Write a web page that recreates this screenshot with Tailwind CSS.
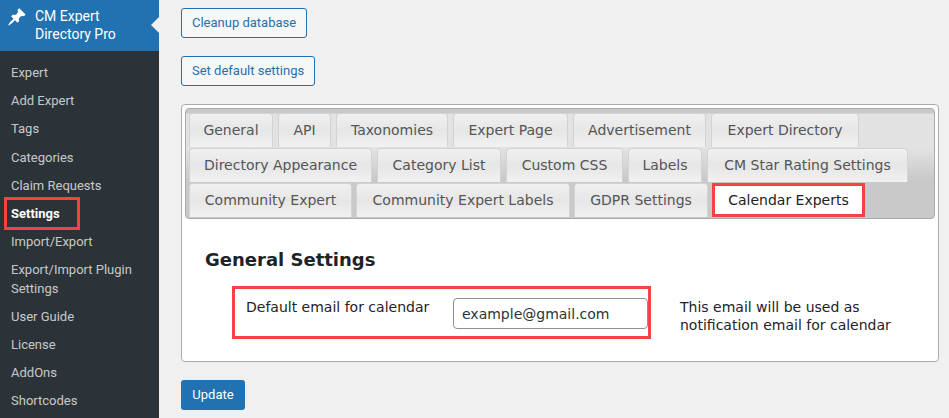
<!DOCTYPE html>
<html lang="en">
<head>
    <meta charset="UTF-8">
    <title>Settings</title>
    <script src="https://cdn.jsdelivr.net/npm/@tailwindcss/browser@4"></script>
</head>
<body class="bg-[#f0f0f1] overflow-hidden">
    <div class="flex h-[418px] w-[949px] relative overflow-hidden">
        <!-- Sidebar -->
        <aside class="w-[159px] shrink-0 bg-[#2c3338] font-['Roboto',sans-serif] text-[13px] leading-[18.2px] text-[#f0f0f1]/80">
            <div class="bg-[#2271b1] h-[51px] flex text-white text-[14px] leading-[18px] relative">
                <svg class="w-5 h-5 mt-[7px] ml-[7px] shrink-0" viewBox="0 0 20 20" fill="#fff"><path d="M10.44 3.02l1.82-1.82 6.36 6.35-1.83 1.82c-1.05-.68-2.48-.57-3.41.36l-.75.75c-.92.93-1.04 2.35-.35 3.41l-1.83 1.82-2.41-2.41-2.8 2.79c-.42.42-3.38 2.71-3.8 2.29s1.86-3.39 2.28-3.81l2.79-2.79L4.1 9.36l1.83-1.82c1.05.69 2.48.57 3.4-.36l.75-.75c.93-.92 1.05-2.35.36-3.41z"/></svg>
                <div class="pl-[8px] pt-[7px]">CM Expert<br>Directory Pro</div>
                <div class="absolute right-0 top-[17px] border-y-[8px] border-y-transparent border-r-[8px] border-r-[#f0f0f1]"></div>
            </div>
            <nav class="pt-[8px] flex flex-col">
                <a class="px-[11px] py-[5px]">Expert</a>
                <a class="px-[11px] py-[5px]">Add Expert</a>
                <a class="px-[11px] py-[5px]">Tags</a>
                <a class="px-[11px] py-[5px]">Categories</a>
                <a class="px-[11px] py-[5px]">Claim Requests</a>
                <a class="px-[11px] py-[5px] font-bold text-white">Settings</a>
                <a class="px-[11px] py-[5px]">Import/Export</a>
                <a class="px-[11px] py-[5px]">Export/Import Plugin Settings</a>
                <a class="px-[11px] py-[5px]">User Guide</a>
                <a class="px-[11px] py-[5px]">License</a>
                <a class="px-[11px] py-[5px]">AddOns</a>
                <a class="px-[11px] py-[5px]">Shortcodes</a>
            </nav>
        </aside>

        <!-- Main Content -->
        <main class="flex-1 pl-[22px] pt-[8px] font-['Roboto',sans-serif] text-[13px]">
            <div class="flex flex-col items-start gap-[18px]">
                <button class="h-[30px] px-[10px] border border-[#2271b1] rounded-[3px] bg-[#f6f7f7] text-[#2271b1]">Cleanup database</button>
                <button class="h-[30px] px-[10px] border border-[#2271b1] rounded-[3px] bg-[#f6f7f7] text-[#2271b1]">Set default settings</button>
            </div>

            <div class="mt-[18px] w-[758px] h-[258px] bg-white border border-[#aaa] rounded-[4px] p-[3px] font-['DejaVu_Sans',sans-serif] text-[14px] text-[#1d2327]">
                <!-- Tabs -->
                <div class="w-[750px] h-[111px] border border-[#aaa] rounded-[4px] bg-[linear-gradient(#c9c9c9_0,#c9c9c9_4px,#e2e2e2_5px,#e2e2e2_40px,#c9c9c9_70px,#c9c9c9_100%)] pt-[4px] pl-[3px] flex flex-col gap-px text-[#555]">
                    <div class="flex gap-[5px] h-[34px]">
                        <span class="w-[84px] h-full flex items-center justify-center border border-b-0 border-[#d3d3d3] rounded-t-[4px] bg-[linear-gradient(#f0f0f0,#e6e6e6_50%,#f1f1f1)]">General</span>
                        <span class="w-[53px] h-full flex items-center justify-center border border-b-0 border-[#d3d3d3] rounded-t-[4px] bg-[linear-gradient(#f0f0f0,#e6e6e6_50%,#f1f1f1)]">API</span>
                        <span class="w-[112px] h-full flex items-center justify-center border border-b-0 border-[#d3d3d3] rounded-t-[4px] bg-[linear-gradient(#f0f0f0,#e6e6e6_50%,#f1f1f1)]">Taxonomies</span>
                        <span class="w-[115px] h-full flex items-center justify-center border border-b-0 border-[#d3d3d3] rounded-t-[4px] bg-[linear-gradient(#f0f0f0,#e6e6e6_50%,#f1f1f1)]">Expert Page</span>
                        <span class="w-[133px] h-full flex items-center justify-center border border-b-0 border-[#d3d3d3] rounded-t-[4px] bg-[linear-gradient(#f0f0f0,#e6e6e6_50%,#f1f1f1)]">Advertisement</span>
                        <span class="w-[148px] h-full flex items-center justify-center border border-b-0 border-[#d3d3d3] rounded-t-[4px] bg-[linear-gradient(#f0f0f0,#e6e6e6_50%,#f1f1f1)]">Expert Directory</span>
                    </div>
                    <div class="flex gap-[5px] h-[34px]">
                        <span class="w-[183px] h-full flex items-center justify-center border border-b-0 border-[#d3d3d3] rounded-t-[4px] bg-[linear-gradient(#f0f0f0,#e6e6e6_50%,#f1f1f1)]">Directory Appearance</span>
                        <span class="w-[124px] h-full flex items-center justify-center border border-b-0 border-[#d3d3d3] rounded-t-[4px] bg-[linear-gradient(#f0f0f0,#e6e6e6_50%,#f1f1f1)]">Category List</span>
                        <span class="w-[117px] h-full flex items-center justify-center border border-b-0 border-[#d3d3d3] rounded-t-[4px] bg-[linear-gradient(#f0f0f0,#e6e6e6_50%,#f1f1f1)]">Custom CSS</span>
                        <span class="w-[74px] h-full flex items-center justify-center border border-b-0 border-[#d3d3d3] rounded-t-[4px] bg-[linear-gradient(#f0f0f0,#e6e6e6_50%,#f1f1f1)]">Labels</span>
                        <span class="w-[201px] h-full flex items-center justify-center border border-b-0 border-[#d3d3d3] rounded-t-[4px] bg-[linear-gradient(#f0f0f0,#e6e6e6_50%,#f1f1f1)]">CM Star Rating Settings</span>
                    </div>
                    <div class="flex gap-[4px] h-[34px]">
                        <span class="w-[163px] h-full flex items-center justify-center border border-b-0 border-[#d3d3d3] rounded-t-[4px] bg-[linear-gradient(#f0f0f0,#e6e6e6_50%,#f1f1f1)]">Community Expert</span>
                        <span class="w-[214px] h-full flex items-center justify-center border border-b-0 border-[#d3d3d3] rounded-t-[4px] bg-[linear-gradient(#f0f0f0,#e6e6e6_50%,#f1f1f1)]">Community Expert Labels</span>
                        <span class="w-[134px] h-full flex items-center justify-center border border-b-0 border-[#d3d3d3] rounded-t-[4px] bg-[linear-gradient(#f0f0f0,#e6e6e6_50%,#f1f1f1)]">GDPR Settings</span>
                        <span class="w-[153px] h-full flex items-center justify-center border-[3px] border-[#f44343] bg-white text-[#212121]">Calendar Experts</span>
                    </div>
                </div>

                <!-- Tab panel -->
                <div class="pl-[20px] pt-[29px]">
                    <h3 class="font-bold text-[18px] leading-[24px] text-[#1d2327]">General Settings</h3>
                    <div class="flex mt-[14px] items-start">
                        <div class="ml-[27px] w-[428px] h-[53px] border-[3px] border-[#f44343] flex items-start">
                            <label class="pl-[11px] pt-[8px] w-[218px] leading-[20px]">Default email for calendar</label>
                            <input class="w-[195px] h-[31px] mt-[9px] px-[8px] border border-[#8c8f94] rounded-[4px] text-[14px] text-[#2c3338] bg-white" value="example@gmail.com">
                        </div>
                        <p class="ml-[29px] mt-[12px] leading-[18px]">This email will be used as notification email for calendar</p>
                    </div>
                </div>
            </div>

            <button class="mt-[18px] h-[30px] w-[64px] rounded-[3px] bg-[#2271b1] text-white">Update</button>
        </main>

        <!-- Red annotation over the Settings menu item -->
        <div class="absolute left-[4px] top-[197px] w-[76px] h-[33px] border-[3px] border-[#f44343]"></div>
    </div>
</body>
</html>
